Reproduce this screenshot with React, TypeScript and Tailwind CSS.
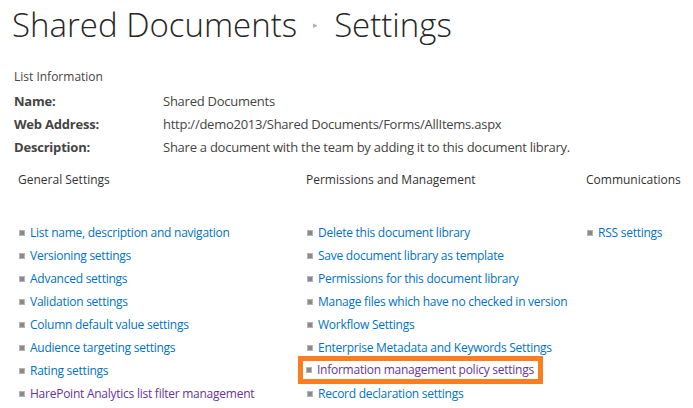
import React from "react";

type LinkItem = { text: string; visited?: boolean; highlight?: boolean };

const columns: { title: string; width: string; items: LinkItem[] }[] = [
  {
    title: "General Settings",
    width: "w-[288px]",
    items: [
      { text: "List name, description and navigation" },
      { text: "Versioning settings" },
      { text: "Advanced settings" },
      { text: "Validation settings" },
      { text: "Column default value settings" },
      { text: "Audience targeting settings" },
      { text: "Rating settings" },
      { text: "HarePoint Analytics list filter management", visited: true },
    ],
  },
  {
    title: "Permissions and Management",
    width: "w-[280px]",
    items: [
      { text: "Delete this document library" },
      { text: "Save document library as template" },
      { text: "Permissions for this document library" },
      { text: "Manage files which have no checked in version" },
      { text: "Workflow Settings" },
      { text: "Enterprise Metadata and Keywords Settings" },
      { text: "Information management policy settings", visited: true, highlight: true },
      { text: "Record declaration settings" },
    ],
  },
  {
    title: "Communications",
    width: "w-[107px]",
    items: [{ text: "RSS settings" }],
  },
];

const info = [
  { label: "Name:", value: "Shared Documents" },
  { label: "Web Address:", value: "http://demo2013/Shared Documents/Forms/AllItems.aspx" },
  { label: "Description:", value: "Share a document with the team by adding it to this document library." },
];

const Bullet = () => (
  <span className="inline-block w-[6px] h-[6px] border border-[#b5b5b5] bg-[#8a8a8a] shrink-0" />
);

const SettingLink = ({ item }: { item: LinkItem }) => {
  const row = (
    <div className="flex items-center gap-[5px] h-[23px]">
      <Bullet />
      <a
        href="#"
        className={
          item.visited
            ? "text-[#663399] whitespace-nowrap text-[12px] tracking-[-0.25px]"
            : "text-[#0072c6] whitespace-nowrap text-[12px] tracking-[-0.25px]"
        }
      >
        {item.text}
      </a>
    </div>
  );
  if (item.highlight) {
    return (
      <div className="-ml-[9px] w-fit -mt-[3px] -mb-[2px]">
        <div className="border-[5px] border-[#fb7d21] pl-[3px] pr-[4px] h-[28px] flex items-center">
          {row}
        </div>
      </div>
    );
  }
  return row;
};

export default function App() {
  return (
    <div
      className="w-[693px] h-[408px] overflow-hidden bg-white text-[#444] text-[13px]"
      style={{ fontFamily: '"Open Sans", "Noto Sans", sans-serif' }}
    >
      <h1 className="pl-[12px] pt-[1px] h-[48px] text-[33px] leading-[44px] font-light text-[#262626] flex items-center gap-[16px] whitespace-nowrap">
        <span>Shared Documents</span>
        <span className="text-[9px] text-[#b0b0b0]">▸</span>
        <span>Settings</span>
      </h1>
      <div className="pl-[14px] pt-[18px]">
        <div className="h-[22px] leading-[22px] text-[12px]">List Information</div>
        <div className="pt-[2px]">
          {info.map((r) => (
            <div key={r.label} className="flex h-[23px] items-center whitespace-nowrap">
              <span className="w-[149px] font-bold tracking-[-0.2px]">{r.label}</span>
              <span className="tracking-[-0.25px]">{r.value}</span>
            </div>
          ))}
        </div>
      </div>
      <div className="flex pl-[18px] pt-[10px]">
        {columns.map((col) => (
          <div key={col.title} className={col.width}>
            <div className="h-[22px] leading-[22px] text-[12px] text-[#333] whitespace-nowrap">{col.title}</div>
            <div className="pt-[30px] pl-[1px]">
              {col.items.map((it) => (
                <SettingLink key={it.text} item={it} />
              ))}
            </div>
          </div>
        ))}
      </div>
    </div>
  );
}
